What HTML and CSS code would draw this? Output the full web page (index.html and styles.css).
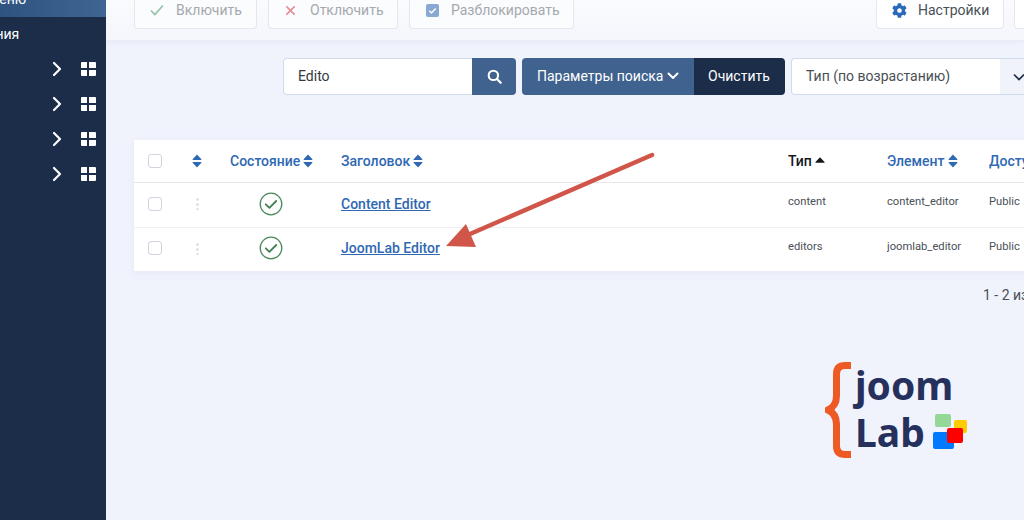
FILE: index.html
```html
<!DOCTYPE html>
<html lang="ru">
<head>
<meta charset="utf-8">
<title>Расширения</title>
<link rel="stylesheet" href="styles.css">
</head>
<body>
<svg class="defs" width="0" height="0" aria-hidden="true">
  <symbol id="sort" viewBox="0 0 10 14"><path d="M5 .6 9.200 5c.4.4.1 1-.4 1H1.200c-.5 0-.8-.6-.4-1zM5 13.400.8 9c-.4-.4-.1-1 .4-1h7.600c.5 0 .8.6.4 1z"/></symbol>
  <symbol id="chev" viewBox="0 0 10 16"><path d="M2 2l6 6-6 6" fill="none" stroke="#fff" stroke-width="2.200" stroke-linecap="round" stroke-linejoin="round"/></symbol>
  <symbol id="grid" viewBox="0 0 15 14"><path fill="#fff" d="M0 1q0-1 1-1h5v6H0zM8 0h6q1 0 1 1v5H8zM0 8h6v6H1q-1 0-1-1zM8 8h7v5q0 1-1 1H8z"/></symbol>
  <symbol id="ok" viewBox="0 0 24 24"><circle cx="12" cy="12" r="10.800" fill="none" stroke="#4d8a5f" stroke-width="1.300"/><path d="M6.800 12.300l3.600 3.500 6.800-6.800" fill="none" stroke="#3f7f52" stroke-width="1.800" stroke-linecap="round" stroke-linejoin="round"/></symbol>
</svg>
<div class="page">
  <aside class="sidebar">
    <div class="side-item side-active"><span class="side-label">Меню</span></div>
    <div class="side-item side-text"><span class="side-label">Расширения</span></div>
    <div class="side-item"><svg class="chev"><use href="#chev"/></svg><svg class="grid"><use href="#grid"/></svg></div>
    <div class="side-item"><svg class="chev"><use href="#chev"/></svg><svg class="grid"><use href="#grid"/></svg></div>
    <div class="side-item"><svg class="chev"><use href="#chev"/></svg><svg class="grid"><use href="#grid"/></svg></div>
    <div class="side-item"><svg class="chev"><use href="#chev"/></svg><svg class="grid"><use href="#grid"/></svg></div>
  </aside>
  <main class="main">
    <div class="toolbar">
      <div class="tb-btn tb-off tb-enable">
        <svg class="tb-ico" viewBox="0 0 14 12"><path d="M1 6.500 4.800 10.500 13 1.500" fill="none" stroke="#4f9a6a" stroke-width="1.600"/></svg>Включить
      </div>
      <div class="tb-btn tb-off tb-disable">
        <svg class="tb-ico" viewBox="0 0 12 12"><path d="M1.500 1.500l9 9m0-9l-9 9" fill="none" stroke="#d9434e" stroke-width="1.700"/></svg>Отключить
      </div>
      <div class="tb-btn tb-off tb-unlock">
        <svg class="tb-ico" viewBox="0 0 13 13"><rect width="13" height="13" rx="2" fill="#3f72b8"/><path d="M3.300 6.700l2.200 2.200 4.200-4.400" fill="none" stroke="#fff" stroke-width="1.500"/></svg>Разблокировать
      </div>
      <div class="tb-btn tb-settings">
        <svg class="tb-ico tb-gear" viewBox="0 0 512 512"><path fill="#2a69b8" d="M487 316l-43-25c4-23 4-47 0-70l43-25c5-3 7-9 5-14-11-36-30-68-55-95-4-4-10-5-15-2l-43 25c-18-15-39-28-61-35V25c0-6-4-11-9-12-37-8-75-8-111 0-5 1-9 6-9 12v50c-22 8-43 20-61 35L85 85c-5-3-11-2-15 2-25 27-44 59-55 95-2 5 0 11 5 14l43 25c-4 23-4 47 0 70l-43 25c-5 3-7 9-5 14 11 36 30 68 55 95 4 4 10 5 15 2l43-25c18 15 39 28 61 35v50c0 6 4 11 9 12 37 8 75 8 111 0 5-1 9-6 9-12v-50c22-8 43-20 61-35l43 25c5 3 11 2 15-2 25-27 44-59 55-95 2-5 0-11-5-14zM256 336c-44 0-80-36-80-80s36-80 80-80 80 36 80 80-36 80-80 80z"/></svg>Настройки
      </div>
      <div class="tb-btn tb-next"></div>
    </div>
    <div class="filters">
      <div class="search-input">Edito</div>
      <div class="search-btn"><svg class="search-ico" viewBox="0 0 16 16"><circle cx="6.800" cy="6.800" r="5" fill="none" stroke="#fff" stroke-width="2.200"/><path d="M10.600 10.600l4 4" stroke="#fff" stroke-width="2.400" stroke-linecap="round"/></svg></div>
      <div class="btn-group">
        <div class="btn-params">Параметры поиска<svg class="btn-chev" viewBox="0 0 12 8"><path d="M1.500 1.500 6 6l4.500-4.500" fill="none" stroke="#fff" stroke-width="2" stroke-linecap="round" stroke-linejoin="round"/></svg></div>
        <div class="btn-clear">Очистить</div>
      </div>
      <div class="select">
        <span class="select-text">Тип (по возрастанию)</span>
        <span class="select-arrow"><svg class="select-chev" viewBox="0 0 12 8"><path d="M1 1.500 6 6.500l5-5" fill="none" stroke="#1c2d4a" stroke-width="1.700"/></svg></span>
      </div>
    </div>
    <table class="list">
      <colgroup><col class="c-check"><col class="c-order"><col class="c-state"><col class="c-title"><col class="c-type"><col class="c-el"><col class="c-acc"></colgroup>
      <thead>
        <tr>
          <th><span class="check"></span></th>
          <th class="center"><svg class="sort"><use href="#sort"/></svg></th>
          <th>Состояние<svg class="sort"><use href="#sort"/></svg></th>
          <th>Заголовок<svg class="sort"><use href="#sort"/></svg></th>
          <th class="th-dark">Тип<svg class="sort-up" viewBox="0 0 10 6"><path d="M5 .3 9.500 5c.3.4 0 .8-.4.8H.9c-.4 0-.7-.4-.4-.8z"/></svg></th>
          <th>Элемент<svg class="sort"><use href="#sort"/></svg></th>
          <th>Доступ<svg class="sort"><use href="#sort"/></svg></th>
        </tr>
      </thead>
      <tbody>
        <tr>
          <td><span class="check"></span></td>
          <td class="center"><span class="drag"></span></td>
          <td class="state"><svg class="ok"><use href="#ok"/></svg></td>
          <td><a class="title-link" href="#">Content Editor</a></td>
          <td class="meta">content</td><td class="meta">content_editor</td><td class="meta">Public</td>
        </tr>
        <tr>
          <td><span class="check"></span></td>
          <td class="center"><span class="drag"></span></td>
          <td class="state"><svg class="ok"><use href="#ok"/></svg></td>
          <td><a class="title-link" href="#">JoomLab Editor</a></td>
          <td class="meta">editors</td><td class="meta">joomlab_editor</td><td class="meta">Public</td>
        </tr>
      </tbody>
    </table>
    <div class="pager">1 - 2 из 2</div>
  </main>
  <svg class="arrow" viewBox="0 0 1024 520"><path d="M652 155 470 234" fill="none" stroke="#d1564a" stroke-width="4.500" stroke-linecap="round"/><path d="M446 246 466 224 476 247z" fill="#d1564a"/></svg>
  <div class="logo">
    <svg class="logo-brace" viewBox="0 0 28 98"><path d="M26 4.500H20Q11.500 4.500 11.500 13V35Q11.500 45 3 49Q11.500 53 11.500 63V85Q11.500 93.500 20 93.500H26" fill="none" stroke="#ee5a24" stroke-width="7"/></svg>
    <div class="logo-text"><span>joom</span><span>Lab</span></div>
    <svg class="logo-mark" viewBox="0 0 36 36"><rect x="2" y="0" width="16" height="13" rx="2" fill="#93d896"/><rect x="21" y="6" width="13" height="13" rx="2" fill="#ffcc00"/><rect y="18" width="21" height="17" rx="2" fill="#007aff"/><rect x="14" y="14" width="16" height="15" rx="2" fill="#ff0000"/></svg>
  </div>
</div>
</body>
</html>
```
FILE: styles.css
```css
* { box-sizing: border-box; }
html, body { margin: 0; height: 100%; overflow: hidden; }
body { font-family: Roboto, "Liberation Sans", sans-serif; background: #f0f3fc; color: #495057; }
.defs { position: absolute; }
.page { position: relative; display: flex; width: 1024px; height: 520px; overflow: hidden; }

.sidebar { flex: 0 0 106px; background: #1c2d4a; display: flex; flex-direction: column; overflow: hidden; }
.side-item { flex: 0 0 35px; display: flex; align-items: center; justify-content: flex-end; padding-right: 10px; overflow: hidden; color: #fff; font-size: 14px; white-space: nowrap; }
.side-active { flex-basis: 17px; align-items: flex-end; justify-content: flex-start; background: linear-gradient(90deg, #2f5380, #3e6593); padding-right: 0; }
.side-active .side-label { margin-left: -13px; margin-bottom: 10px; }
.side-text { flex-basis: 33px; justify-content: flex-start; padding-right: 0; }
.side-text .side-label { margin-left: -63px; font-size: 14px; }
.side-item.side-text + .side-item { margin-top: 1px; }
.chev { width: 10px; height: 16px; margin-right: 19px; }
.grid { width: 15px; height: 14px; }

.main { flex: 1 1 0; min-width: 0; display: flex; flex-direction: column; overflow: hidden; }
.toolbar { flex: 0 0 41px; display: flex; align-items: flex-start; padding-left: 28px; background: linear-gradient(180deg, #fafbfe, #f4f6fc); border-bottom: 1px solid #e9edf6; box-shadow: 0 1px 4px rgba(180, 195, 225, .2); }
.tb-btn { height: 37px; margin-top: -8px; display: flex; align-items: center; flex: 0 0 auto; margin-right: 11px; background: #fff; border: 1px solid #e3e7ef; border-top: 0; border-radius: 0 0 4px 4px; font-size: 14px; color: #495057; white-space: nowrap; }
.tb-off { background: #fbfcfe; color: #a5a9ae; }
.tb-off .tb-ico { opacity: .6; }
.tb-ico { flex: 0 0 auto; }
.tb-enable { width: 123px; padding-left: 15px; }
.tb-enable .tb-ico { width: 14px; height: 12px; margin-right: 12px; }
.tb-disable { width: 130px; padding-left: 16px; }
.tb-disable .tb-ico { width: 11px; height: 11px; margin-right: 14px; }
.tb-unlock { width: 165px; padding-left: 16px; margin-right: 0; }
.tb-unlock .tb-ico { width: 13px; height: 13px; margin-right: 12px; }
.tb-settings { width: 128px; padding-left: 15px; margin-left: 302px; margin-right: 10px; }
.tb-gear { width: 15px; height: 15px; margin-right: 11px; }
.tb-next { width: 30px; margin-right: 0; }

.filters { flex: 0 0 auto; display: flex; margin: 17px 0 0 177px; height: 37px; font-size: 14px; }
.search-input { flex: 0 0 189px; display: flex; align-items: center; padding: 0 0 1px 14px; background: #fff; border: 1px solid #cfdcee; border-right: 0; border-radius: 4px 0 0 4px; color: #343a40; }
.search-btn { flex: 0 0 44px; display: flex; align-items: center; justify-content: center; background: #3f628f; border-radius: 0 4px 4px 0; margin-right: 6px; }
.search-ico { width: 15px; height: 15px; }
.btn-group { flex: 0 0 263px; display: flex; border-radius: 4px; overflow: hidden; color: #fff; }
.btn-params { flex: 0 0 172px; display: flex; align-items: center; padding: 0 0 1px 15px; background: #3f628f; }
.btn-chev { width: 12px; height: 8px; margin-left: 4px; }
.btn-clear { flex: 1; display: flex; align-items: center; padding: 0 0 1px 14px; background: #1c2d4a; }
.select { flex: 0 0 240px; display: flex; margin-left: 6px; background: #fff; border: 1px solid #cfdcee; border-right: 0; border-radius: 4px 0 0 4px; color: #495057; }
.select-text { flex: 0 0 208px; display: flex; align-items: center; padding: 0 0 1px 14px; }
.select-arrow { flex: 1; display: flex; align-items: center; padding-left: 13px; background: #f0f3fa; }
.select-chev { width: 12px; height: 8px; }

.list { flex: 0 0 auto; width: 990px; margin: 45px 0 0 28px; border-collapse: collapse; table-layout: fixed; background: #fff; box-shadow: 0 2px 6px rgba(190, 200, 225, .25); font-size: 11.200px; color: #495057; }
.c-check { width: 46px; } .c-order { width: 34px; } .c-state { width: 127px; } .c-title { width: 447px; } .c-type { width: 99px; } .c-el { width: 102px; } .c-acc { width: 135px; }
.list th { height: 42px; padding: 0 0 0 14px; text-align: left; font-size: 14px; font-weight: 500; color: #2f69b3; border-bottom: 1px solid #e6e8ec; white-space: nowrap; overflow: hidden; }
.list th:nth-child(2) { padding: 0; text-align: center; }
.list td:nth-child(2) { padding: 0 0 2px; text-align: center; }
.list th:nth-child(3) { padding-left: 16px; }
.list th:nth-child(4) { padding-left: 0; }
.list td:nth-child(4) { padding: 0 0 2px; }
.list th:nth-child(5), .list th:nth-child(6), .list th:nth-child(7) { padding-left: 0; }
.list th.th-dark { color: #14181d; }
.list td { height: 45px; padding: 0 0 2px 14px; border-bottom: 1px solid #eef0f3; white-space: nowrap; overflow: hidden; }
.list tbody tr:last-child td { border-bottom: 0; height: 44px; }
.list td.meta { padding: 0 0 6px; }
.check { display: block; width: 14px; height: 14px; background: #fff; border: 1px solid #ced4e0; border-radius: 3px; }
.sort { width: 10px; height: 14px; margin-left: 3px; vertical-align: -2px; fill: #2f69b3; }
.center .sort { display: block; margin: 0 auto; }
.sort-up { width: 10px; height: 6px; margin: 0 0 3px 3px; fill: #14181d; }
.drag { display: block; width: 3px; height: 13px; margin: 0 auto; background: radial-gradient(circle, #dfe2e7 1.300px, transparent 1.500px) 0 0 / 3px 5px; }
.list td.state { padding: 0 0 2px 45px; }
.ok { display: block; width: 24px; height: 24px; }
.title-link { font-size: 14px; font-weight: 500; color: #2f69b3; text-decoration: underline; }

.pager { flex: 0 0 auto; margin: 16px 0 0 877px; font-size: 14px; color: #495057; white-space: nowrap; }

.arrow { position: absolute; left: 0; top: 0; width: 1024px; height: 520px; pointer-events: none; }
.logo { position: absolute; left: 825px; top: 361px; display: flex; align-items: flex-start; }
.logo-brace { width: 28px; height: 98px; }
.logo-text { display: flex; flex-direction: column; margin: 0 0 0 2px; font-family: "Noto Sans", sans-serif; font-weight: 700; font-size: 39px; line-height: 47px; color: #25315c; }
.logo-mark { position: absolute; left: 108px; top: 53px; width: 36px; height: 36px; }
```
